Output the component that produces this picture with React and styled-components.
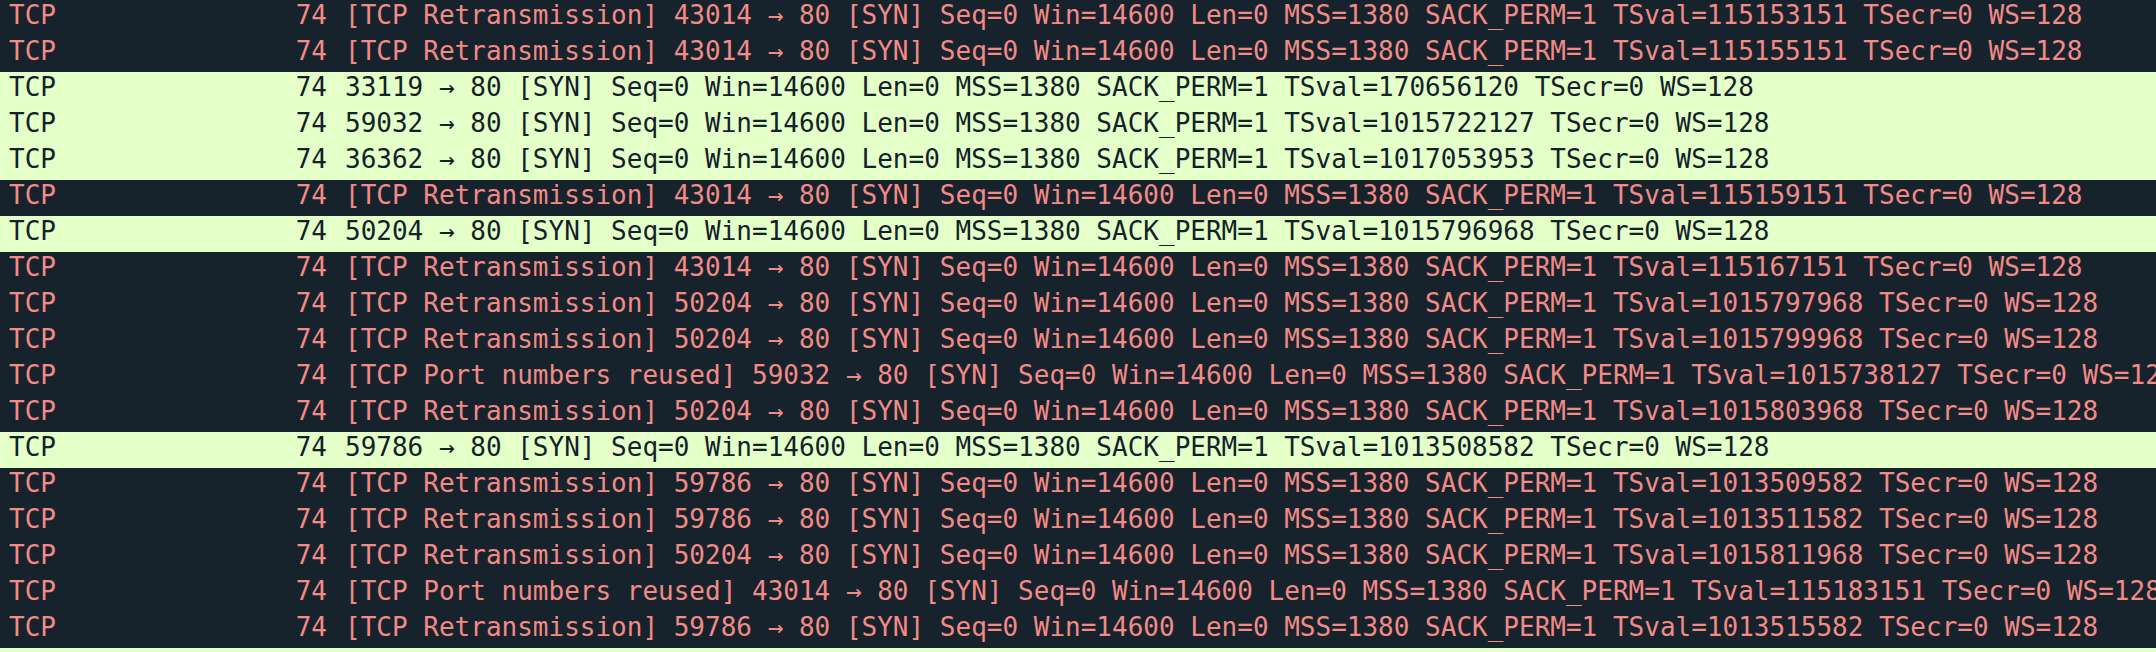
import React from "react";
import styled, { createGlobalStyle } from "styled-components";

const GlobalStyle = createGlobalStyle`
  html, body {
    margin: 0;
    padding: 0;
    background: #16232d;
    overflow: hidden;
  }
`;

const PacketList = styled.div`
  display: flex;
  flex-direction: column;
  width: 2156px;
  height: 652px;
  overflow: hidden;
  font-family: "DejaVu Sans Mono", "Liberation Mono", monospace;
  font-size: 26px;
`;

const Row = styled.div`
  display: flex;
  flex-shrink: 0;
  height: 36px;
  line-height: 30px;
  padding: 0 0 6px 9px;
  box-sizing: border-box;
  white-space: nowrap;
  background: ${p => (p.$bad ? "#16232d" : "#e4ffc7")};
  color: ${p => (p.$bad ? "#f28a86" : "#12212a")};
`;

const Protocol = styled.span`
  width: 200px;
  flex-shrink: 0;
`;

const Length = styled.span`
  width: 118px;
  flex-shrink: 0;
  text-align: right;
`;

const Info = styled.span`
  margin-left: 18px;
`;

const syn = (port, tsval) =>
  `${port} → 80 [SYN] Seq=0 Win=14600 Len=0 MSS=1380 SACK_PERM=1 TSval=${tsval} TSecr=0 WS=128`;

const packets = [
  { bad: true, info: "[TCP Retransmission] " + syn(43014, "115153151") },
  { bad: true, info: "[TCP Retransmission] " + syn(43014, "115155151") },
  { bad: false, info: syn(33119, "170656120") },
  { bad: false, info: syn(59032, "1015722127") },
  { bad: false, info: syn(36362, "1017053953") },
  { bad: true, info: "[TCP Retransmission] " + syn(43014, "115159151") },
  { bad: false, info: syn(50204, "1015796968") },
  { bad: true, info: "[TCP Retransmission] " + syn(43014, "115167151") },
  { bad: true, info: "[TCP Retransmission] " + syn(50204, "1015797968") },
  { bad: true, info: "[TCP Retransmission] " + syn(50204, "1015799968") },
  { bad: true, info: "[TCP Port numbers reused] " + syn(59032, "1015738127") },
  { bad: true, info: "[TCP Retransmission] " + syn(50204, "1015803968") },
  { bad: false, info: syn(59786, "1013508582") },
  { bad: true, info: "[TCP Retransmission] " + syn(59786, "1013509582") },
  { bad: true, info: "[TCP Retransmission] " + syn(59786, "1013511582") },
  { bad: true, info: "[TCP Retransmission] " + syn(50204, "1015811968") },
  { bad: true, info: "[TCP Port numbers reused] " + syn(43014, "115183151") },
  { bad: true, info: "[TCP Retransmission] " + syn(59786, "1013515582") },
  { bad: false, info: syn(43014, "115185151") },
];

function App() {
  return (
    <>
      <GlobalStyle />
      <PacketList>
        {packets.map((p, idx) => (
          <Row key={idx} $bad={p.bad}>
            <Protocol>TCP</Protocol>
            <Length>74</Length>
            <Info>{p.info}</Info>
          </Row>
        ))}
      </PacketList>
    </>
  );
}

export default App;
